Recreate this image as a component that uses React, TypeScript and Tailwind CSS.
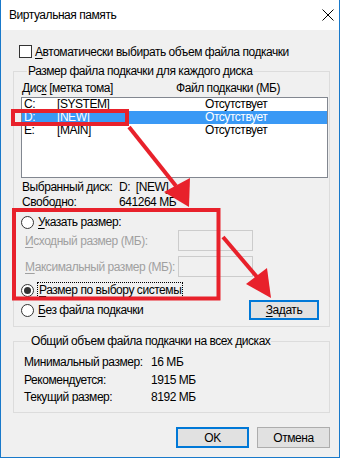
import React from "react";

const FONT = "font-['Liberation_Sans',Arial,sans-serif]";

function U({ children }: { children: React.ReactNode }) {
  return <span className="underline underline-offset-[2px]">{children}</span>;
}

function Radio({ checked = false }: { checked?: boolean }) {
  return (
    <span className="flex h-[13px] w-[13px] shrink-0 items-center justify-center rounded-full border border-[#333] bg-white">
      {checked && <span className="h-[7px] w-[7px] rounded-full bg-[#333]" />}
    </span>
  );
}

function Box() {
  return <span className="block h-[21px] w-[75px] border border-[#cccccc] bg-[#f0f0f0]" />;
}

const rows = [
  { d: "C:", label: "[SYSTEM]", size: "Отсутствует", sel: false },
  { d: "D:", label: "[NEW]", size: "Отсутствует", sel: true },
  { d: "E:", label: "[MAIN]", size: "Отсутствует", sel: false },
];

export default function App() {
  return (
    <div className={`relative flex h-[458px] w-[340px] flex-col overflow-hidden whitespace-nowrap border-x border-b border-[#1979ca] bg-[#f0f0f0] text-[12px] leading-[14px] tracking-[-0.45px] text-black ${FONT}`}>
      {/* title bar */}
      <div className="flex h-[30px] shrink-0 items-center justify-between bg-white pl-[8px] pr-[5px]">
        <span>Виртуальная память</span>
        <svg width="12" height="12" viewBox="0 0 12 12">
          <path d="M0.5 0.5 L11.5 11.5 M11.5 0.5 L0.5 11.5" stroke="#000" strokeWidth="1" />
        </svg>
      </div>

      <div className="flex shrink-0 flex-col pl-[12px]">
        <div className="mt-[15px] ml-[6px] flex h-[13px] items-center gap-[3px]">
          <span className="h-[13px] w-[13px] border border-[#333] bg-white" />
          <span><U>А</U>втоматически выбирать объем файла подкачки</span>
        </div>

        {/* per-disk group */}
        <fieldset className="mt-[6px] w-[317px] border border-[#dcdcdc] pl-[7px] pb-[6px]">
          <legend className="ml-[6px] px-[1px]">Размер файла подкачки для каждого диска</legend>
          <div className="mt-[3px] flex pl-[1px]">
            <span className="w-[154px]">Дис<U>к</U> [метка тома]</span>
            <span>Файл подкачки (МБ)</span>
          </div>
          <div className="mt-[2px] h-[81px] w-[307px] border border-[#828790] bg-white">
            {rows.map((r) => (
              <div key={r.d} className={`flex h-[13px] items-center pl-[2px] leading-[13px] ${r.sel ? "bg-[#3a99f5] text-white" : ""}`}>
                <span className="w-[33px]">{r.d}</span>
                <span className="w-[148px]">{r.label}</span>
                <span>{r.size}</span>
              </div>
            ))}
          </div>

          <div className="mt-[2px] flex pl-[1px]">
            <span className="w-[97px]">Выбранный диск:</span>
            <span>D:&nbsp;&nbsp;[NEW]</span>
          </div>
          <div className="mt-[1px] flex pl-[1px]">
            <span className="w-[97px]">Свободно:</span>
            <span>641264 МБ</span>
          </div>

          <div className="mt-[6px] flex items-center gap-[4px]">
            <Radio />
            <span><U>У</U>казать размер:</span>
          </div>
          <div className="mt-[1px] flex h-[21px] items-center pl-[4px] text-[#a0a0a0]">
            <span className="w-[153px]"><U>И</U>сходный размер (МБ):</span>
            <Box />
          </div>
          <div className="mt-[5px] flex h-[21px] items-center pl-[4px] text-[#a0a0a0]">
            <span className="w-[153px]"><U>М</U>аксимальный размер (МБ):</span>
            <Box />
          </div>
          <div className="mt-[5px] flex items-center gap-[3px]">
            <Radio checked />
            <span className="border border-dotted border-black px-[1px]"><U>Р</U>азмер по выбору системы</span>
          </div>
          <div className="mt-[2px] flex h-[20px] w-[307px] items-center">
            <Radio />
            <span className="ml-[4px]"><U>Б</U>ез файла подкачки</span>
            <button className="ml-auto mr-[9px] flex h-[20px] w-[70px] items-center justify-center border-2 border-[#0078d7] bg-[#e1e1e1]">
              <U>З</U>адать
            </button>
          </div>
        </fieldset>

        {/* totals group */}
        <fieldset className="mt-[7px] w-[317px] border border-[#dcdcdc] pl-[10px] pb-[8px]">
          <legend className="ml-[6px] px-[1px]">Общий объем файла подкачки на всех дисках</legend>
          <div className="mt-[7px] flex">
            <span className="w-[127px]">Минимальный размер:</span>
            <span>16 МБ</span>
          </div>
          <div className="mt-[4px] flex">
            <span className="w-[127px]">Рекомендуется:</span>
            <span>1915 МБ</span>
          </div>
          <div className="mt-[3px] flex">
            <span className="w-[127px]">Текущий размер:</span>
            <span>8192 МБ</span>
          </div>
        </fieldset>

        <div className="mt-[14px] flex w-[317px] justify-end gap-[8px]">
          <button className="flex h-[21px] w-[73px] items-center justify-center border-2 border-[#0078d7] bg-[#e1e1e1]">OK</button>
          <button className="flex h-[21px] w-[73px] items-center justify-center border border-[#adadad] bg-[#e1e1e1]">Отмена</button>
        </div>
      </div>

      {/* red annotations */}
      <svg className="pointer-events-none absolute top-0 left-[-1px]" width="340" height="458" viewBox="0 0 340 458">
        <g fill="none" stroke="#e8212b" strokeWidth="4">
          <rect x="13" y="111" width="114" height="13" />
          <rect x="14" y="210" width="204.5" height="88.5" />
          <path d="M129 127 L176 186" />
          <path d="M223 237 L257 277" />
        </g>
        <g fill="#e8212b">
          <polygon points="189,207 164,192 190,178" />
          <polygon points="271,298 246,284 267,268" />
        </g>
      </svg>
    </div>
  );
}
